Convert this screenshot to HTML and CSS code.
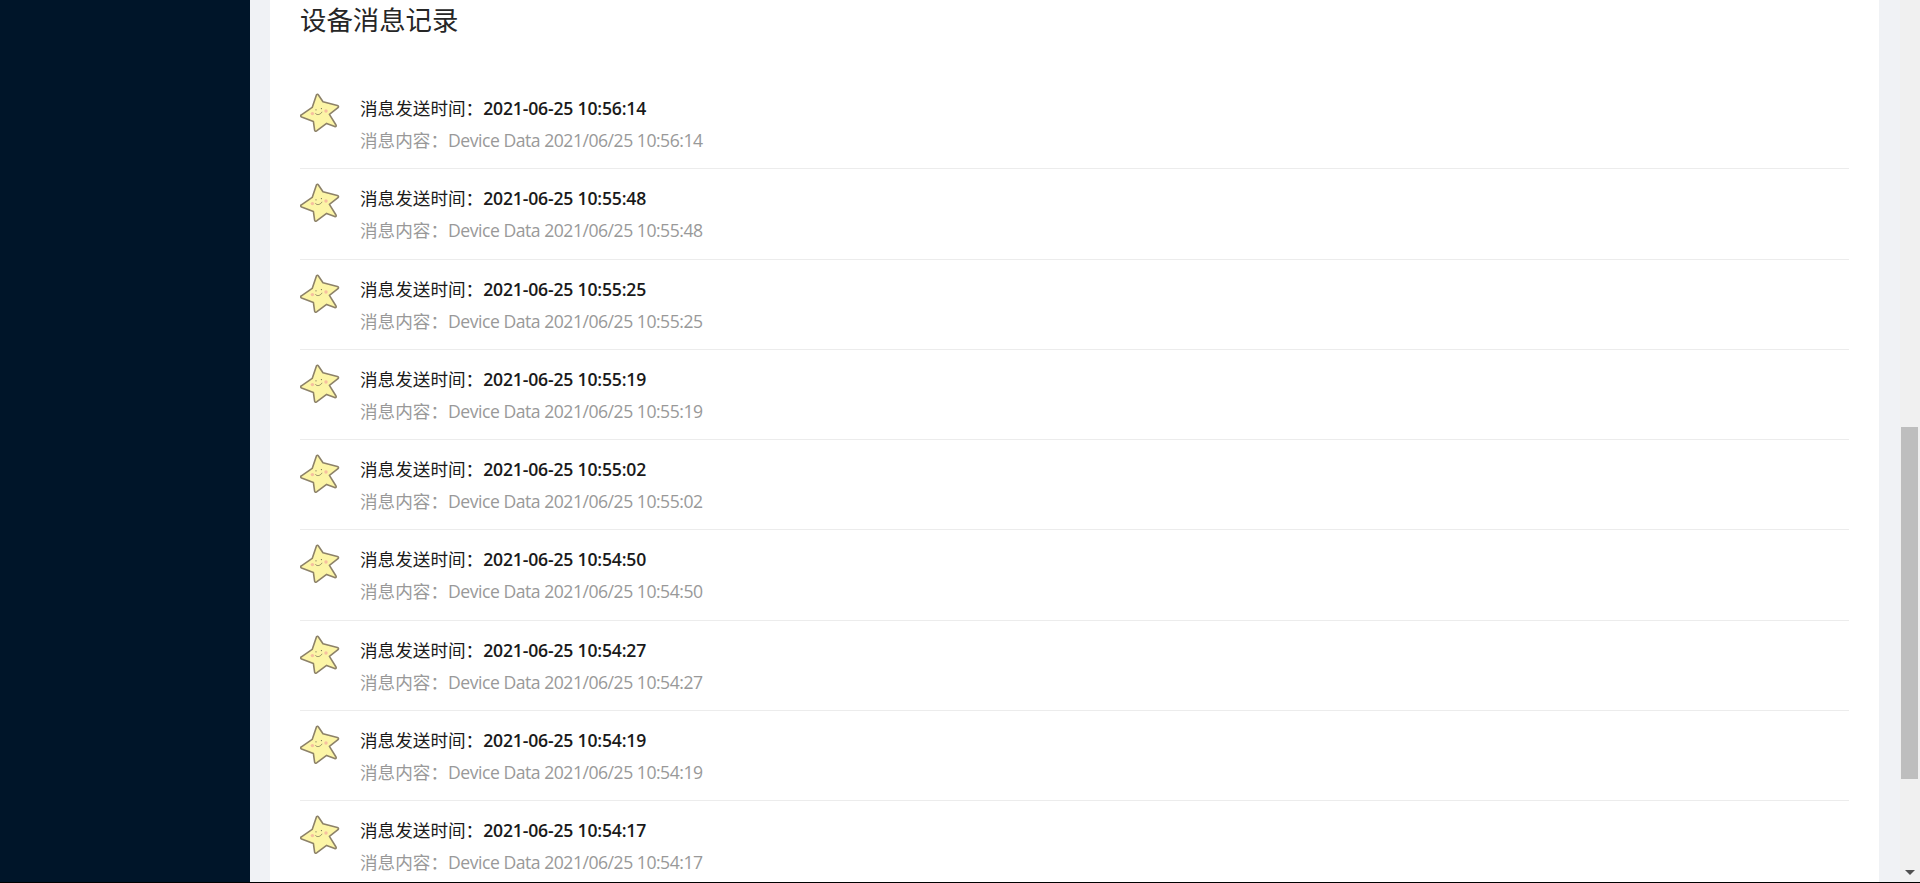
FILE: index.html
```html
<!DOCTYPE html>
<html lang="zh-CN">
<head>
    <meta charset="UTF-8">
    <meta name="viewport" content="width=device-width, initial-scale=1.0">
    <title>设备消息记录</title>
    <link rel="stylesheet" href="styles.css">
</head>
<body>

<svg class="defs" width="0" height="0">
    <symbol id="star" viewBox="0 0 40 40">
        <path d="M16.6 1.6 C17.4 1 18 1.3 18.6 2.2 L23 8.8 L37.4 12.6 C38.6 13 38.8 13.8 38 14.7 L29.4 21.4 L36 32 C36.6 33.2 36 33.8 34.8 33.6 L26.6 30.4 L16.6 37.8 C15.4 38.6 14.6 38 14.6 37 L13.4 28.6 L1.6 24 C0.4 23.4 0.4 22.4 1.4 21.8 L12.2 14.4 Z" fill="#fcf5a6" stroke="#8d8269" stroke-width="1.6" stroke-linejoin="round"/>
        <circle cx="12.4" cy="20.6" r="1.7" fill="#f6bfa0"/>
        <circle cx="26" cy="18" r="1.7" fill="#f6bfa0"/>
        <circle cx="16" cy="16.8" r=".6" fill="#6f6a50"/>
        <circle cx="21.4" cy="15.6" r=".6" fill="#6f6a50"/>
        <path d="M15.4 20.4 C17 22.4 20.6 21.8 22 18.8" fill="none" stroke="#7a7355" stroke-width=".8"/>
    </symbol>
</svg>

<div class="sidebar"></div>

<div class="main">
    <div class="card">
        <h2 class="title">设备消息记录</h2>
        <ul class="msg-list">
            <li class="msg">
                <svg class="avatar"><use href="#star"/></svg>
                <div class="msg-body">
                    <div class="msg-time">消息发送时间：<b>2021-06-25 10:56:14</b></div>
                    <div class="msg-text">消息内容：<span>Device Data 2021/06/25 10:56:14</span></div>
                </div>
            </li>
            <li class="msg">
                <svg class="avatar"><use href="#star"/></svg>
                <div class="msg-body">
                    <div class="msg-time">消息发送时间：<b>2021-06-25 10:55:48</b></div>
                    <div class="msg-text">消息内容：<span>Device Data 2021/06/25 10:55:48</span></div>
                </div>
            </li>
            <li class="msg">
                <svg class="avatar"><use href="#star"/></svg>
                <div class="msg-body">
                    <div class="msg-time">消息发送时间：<b>2021-06-25 10:55:25</b></div>
                    <div class="msg-text">消息内容：<span>Device Data 2021/06/25 10:55:25</span></div>
                </div>
            </li>
            <li class="msg">
                <svg class="avatar"><use href="#star"/></svg>
                <div class="msg-body">
                    <div class="msg-time">消息发送时间：<b>2021-06-25 10:55:19</b></div>
                    <div class="msg-text">消息内容：<span>Device Data 2021/06/25 10:55:19</span></div>
                </div>
            </li>
            <li class="msg">
                <svg class="avatar"><use href="#star"/></svg>
                <div class="msg-body">
                    <div class="msg-time">消息发送时间：<b>2021-06-25 10:55:02</b></div>
                    <div class="msg-text">消息内容：<span>Device Data 2021/06/25 10:55:02</span></div>
                </div>
            </li>
            <li class="msg">
                <svg class="avatar"><use href="#star"/></svg>
                <div class="msg-body">
                    <div class="msg-time">消息发送时间：<b>2021-06-25 10:54:50</b></div>
                    <div class="msg-text">消息内容：<span>Device Data 2021/06/25 10:54:50</span></div>
                </div>
            </li>
            <li class="msg">
                <svg class="avatar"><use href="#star"/></svg>
                <div class="msg-body">
                    <div class="msg-time">消息发送时间：<b>2021-06-25 10:54:27</b></div>
                    <div class="msg-text">消息内容：<span>Device Data 2021/06/25 10:54:27</span></div>
                </div>
            </li>
            <li class="msg">
                <svg class="avatar"><use href="#star"/></svg>
                <div class="msg-body">
                    <div class="msg-time">消息发送时间：<b>2021-06-25 10:54:19</b></div>
                    <div class="msg-text">消息内容：<span>Device Data 2021/06/25 10:54:19</span></div>
                </div>
            </li>
            <li class="msg">
                <svg class="avatar"><use href="#star"/></svg>
                <div class="msg-body">
                    <div class="msg-time">消息发送时间：<b>2021-06-25 10:54:17</b></div>
                    <div class="msg-text">消息内容：<span>Device Data 2021/06/25 10:54:17</span></div>
                </div>
            </li>
        </ul>
    </div>
</div>

<div class="scrollbar">
    <div class="scroll-thumb"></div>
    <div class="scroll-arrow"></div>
</div>

</body>
</html>
```

FILE: styles.css
```css
html, body {
    margin: 0;
    height: 100%;
    overflow: hidden;
}
body {
    display: flex;
    box-sizing: border-box;
    border-bottom: 1px solid #000;
    background-color: #f0f2f5;
    font-family: "Open Sans", "Noto Sans CJK SC", sans-serif;
}
.defs {
    position: absolute;
}
.sidebar {
    flex: 0 0 250px;
    background-color: #001529;
}
.main {
    flex: 1;
    padding: 0 21px 0 20px;
    overflow: hidden;
}
.card {
    background-color: white;
    padding: 0 30px;
    height: 100%;
}
.title {
    margin: 0;
    padding-bottom: 39px;
    font-size: 26.4px;
    font-weight: normal;
    line-height: 40px;
    color: #262626;
}
.msg-list {
    list-style: none;
    margin: 0;
    padding: 0;
}
.msg {
    display: flex;
    align-items: flex-start;
    height: 90.28px;
    box-sizing: border-box;
    padding-top: 15px;
    border-bottom: 1px solid #ececec;
}
.msg:last-child {
    border-bottom: none;
}
.avatar {
    flex: 0 0 40px;
    width: 40px;
    height: 40px;
    margin: -1px 20px 0 0;
    filter: blur(0.3px);
}
.msg-body {
    font-size: 17.6px;
    line-height: 28px;
}
.msg-time {
    margin-bottom: 4px;
    color: #1a1a1a;
}
.msg-time b {
    font-weight: 600;
    letter-spacing: -0.18px;
}
.msg-text {
    color: #999;
}
.msg-text span {
    letter-spacing: -0.48px;
}
.scrollbar {
    flex: 0 0 20px;
    display: flex;
    flex-direction: column;
    background-color: #f0f0f0;
}
.scroll-thumb {
    width: 17px;
    height: 352px;
    margin: 427px 0 0 1px;
    background-color: #bebebe;
}
.scroll-arrow {
    width: 0;
    height: 0;
    margin: 91px 0 0 5px;
    border-left: 5px solid transparent;
    border-right: 5px solid transparent;
    border-top: 5px solid #505050;
}
```
